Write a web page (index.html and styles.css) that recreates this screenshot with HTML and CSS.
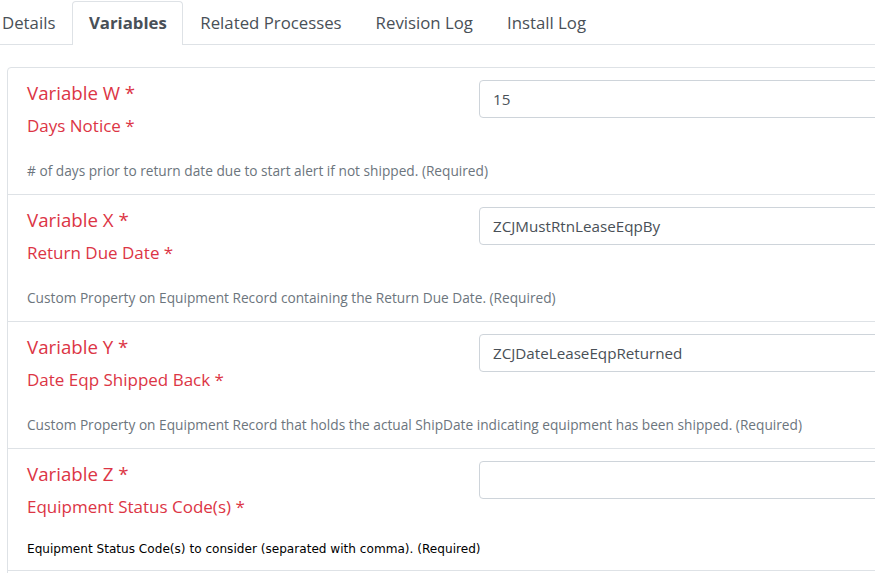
FILE: index.html
```html
<!DOCTYPE html>
<html>
<head>
<meta charset="utf-8">
<link rel="stylesheet" href="styles.css">
</head>
<body>
<div class="page">
  <ul class="tabs">
    <li class="tab">Details</li>
    <li class="tab active">Variables</li>
    <li class="tab">Related Processes</li>
    <li class="tab">Revision Log</li>
    <li class="tab">Install Log</li>
  </ul>
  <div class="card">
    <div class="var-row">
      <div class="var-info">
        <div class="var-name">Variable W *</div>
        <div class="var-title">Days Notice *</div>
        <div class="var-desc">
          # of days prior to return date due to start alert if not shipped. (Required)
        </div>
      </div>
      <div class="var-field"><div class="input">15</div></div>
    </div>
    <div class="var-row">
      <div class="var-info">
        <div class="var-name">Variable X *</div>
        <div class="var-title">Return Due Date *</div>
        <div class="var-desc">
          Custom Property on Equipment Record containing the Return Due Date. (Required)
        </div>
      </div>
      <div class="var-field"><div class="input">ZCJMustRtnLeaseEqpBy</div></div>
    </div>
    <div class="var-row">
      <div class="var-info">
        <div class="var-name">Variable Y *</div>
        <div class="var-title">Date Eqp Shipped Back *</div>
        <div class="var-desc">
          Custom Property on Equipment Record that holds the actual ShipDate indicating equipment has been shipped. (Required)
        </div>
      </div>
      <div class="var-field"><div class="input">ZCJDateLeaseEqpReturned</div></div>
    </div>
    <div class="var-row short">
      <div class="var-info">
        <div class="var-name">Variable Z *</div>
        <div class="var-title">Equipment Status Code(s) *</div>
        <div class="var-desc plain">
          Equipment Status Code(s) to consider (separated with comma). (Required)
        </div>
      </div>
      <div class="var-field"><div class="input"></div></div>
    </div>
    <div class="var-row"></div>
  </div>
</div>
</body>
</html>
```

FILE: styles.css
```css
html, body {
  margin: 0;
  padding: 0;
  background: #ffffff;
  overflow: hidden;
}

body {
  font-family: "Open Sans", "Noto Sans", sans-serif;
  color: #495057;
}

.page {
  width: 1000px;
}

.tabs {
  list-style: none;
  margin: 0 0 0 -15px;
  padding: 1px 0 0 0;
  display: flex;
  border-bottom: 1px solid #dee2e6;
}

.tab {
  padding: 0 16px;
  height: 42px;
  line-height: 42px;
  font-size: 16.8px;
  color: #495057;
  border: 1px solid transparent;
  border-bottom: none;
  border-radius: 4px 4px 0 0;
  margin-bottom: -1px;
}

.tab.active {
  font-weight: 700;
  color: #495057;
  background: #ffffff;
  border-color: #dee2e6;
  height: 43px;
  padding: 0 15.5px;
}

.card {
  margin: 22px 0 0 7px;
  border: 1px solid #dee2e6;
  border-radius: 4px;
  background: #ffffff;
}

.var-row {
  display: grid;
  grid-template-columns: 452px 1fr;
  border-bottom: 1px solid #dee2e6;
  height: 126px;
  box-sizing: content-box;
}

.var-row.short {
  height: 121px;
}

.var-info {
  padding: 10px 0 0 19px;
}

.var-name {
  font-size: 18.7px;
  line-height: 30px;
  color: #dc3545;
}

.var-title {
  font-size: 17px;
  line-height: 27px;
  margin-top: 4px;
  color: #dc3545;
}

.var-desc {
  margin-top: 22px;
  font-size: 13.7px;
  line-height: 20px;
  color: #6c757d;
  white-space: nowrap;
}

.var-desc.plain {
  font-family: "DejaVu Sans", Verdana, sans-serif;
  font-size: 12.1px;
  color: #000000;
  margin-top: 19px;
}

.var-field {
  padding: 12px 0 0 19px;
}

.input {
  height: 36px;
  line-height: 36px;
  border: 1px solid #ced4da;
  border-radius: 4px;
  padding: 0 13px;
  font-size: 15.2px;
  color: #495057;
  width: 520px;
}
```
